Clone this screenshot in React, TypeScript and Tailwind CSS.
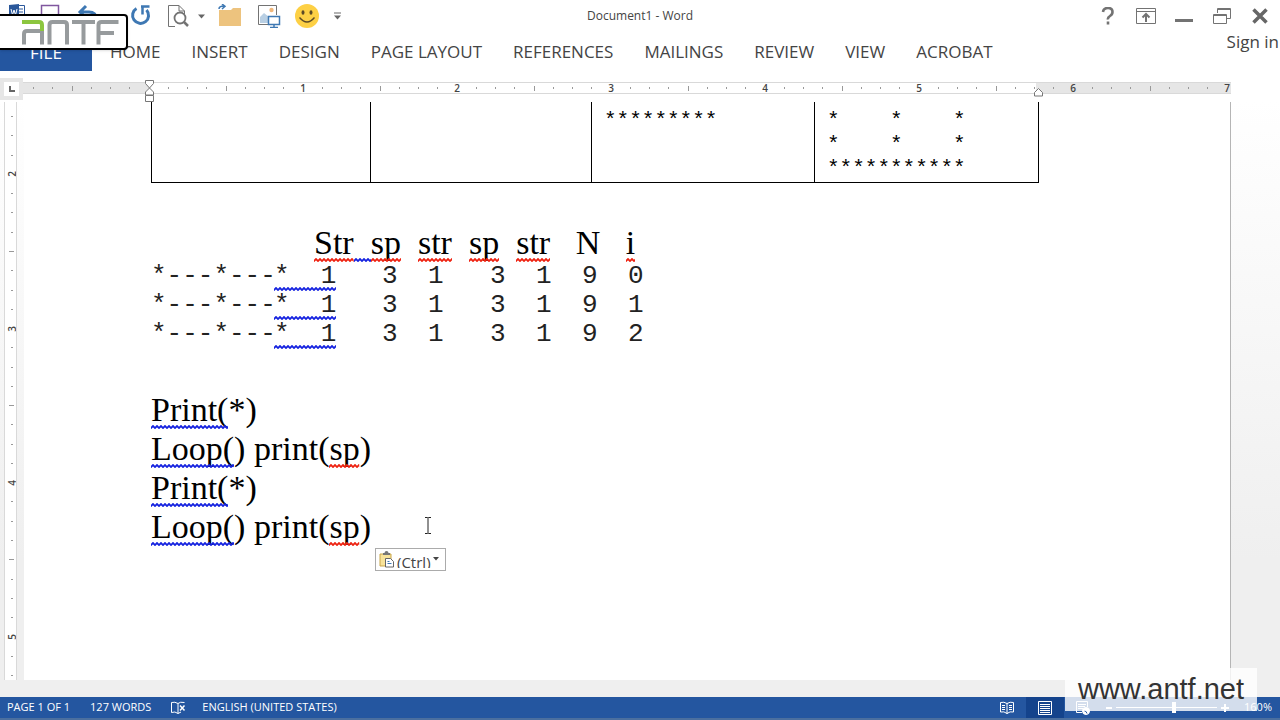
import { useState } from 'react';
import type { ReactNode } from 'react';

const tabs = ['HOME', 'INSERT', 'DESIGN', 'PAGE LAYOUT', 'REFERENCES', 'MAILINGS', 'REVIEW', 'VIEW', 'ACROBAT'];

const traceRows = [
  ['3', '1', '3', '1', '9', '0'],
  ['3', '1', '3', '1', '9', '1'],
  ['3', '1', '3', '1', '9', '2'],
];

const horizontalMarks = Array.from({ length: 63 }, (_, i) => i - 6);
const verticalMarks = Array.from({ length: 30 }, (_, i) => i + 13);

// Spelling (red) and grammar (blue) squiggle under a run of text
function Squiggle({ color = 'blue', id, children }: { color?: 'blue' | 'red'; id: string; children: ReactNode }) {
  return (
    <span className="relative inline-block">
      {children}
      <svg className="absolute bottom-0 left-0 h-[4px] w-full" aria-hidden="true">
        <defs>
          <pattern id={id} width="4" height="4" patternUnits="userSpaceOnUse">
            <path
              d="M-1 2 L0 3 L2 1 L4 3 L5 2"
              fill="none"
              stroke={color === 'red' ? '#ee2211' : '#1522e0'}
              strokeWidth="1.8"
            />
          </pattern>
        </defs>
        <rect width="100%" height="4" fill={`url(#${id})`} />
      </svg>
    </span>
  );
}

function Caret() {
  return (
    <svg width="8" height="5" viewBox="0 0 8 5">
      <path d="M0 0.5h7L3.5 4.5z" fill="#666" />
    </svg>
  );
}

function Logo() {
  return (
    <div
      className="absolute left-0 top-[14px] flex h-9 w-[128px] items-center gap-[3px] rounded-r-sm border-y-2 border-r-2 border-black bg-white pl-[22px] shadow"
      role="img"
      aria-label="ANTF"
    >
      <svg width="98" height="26" viewBox="0 0 98 26" fill="none" stroke="#979b9d" strokeWidth="4">
        <path d="M2 25.500V15q0-3 3-3H20M20 12V25.500" />
        <path d="M0 3H17q3 0 3 3V12" stroke="#8cc63f" />
        <path d="M27.500 25.500V6q0-3 3-3H42q3 0 3 3V25.500" />
        <path d="M50 3H73M61.500 3V25.500" />
        <path d="M76.500 25.500V6q0-3 3-3H96.500M76.500 14H92" />
      </svg>
    </div>
  );
}

function QuickAccess() {
  return (
    <div className="flex h-8 items-center [&>button]:flex [&>button]:h-8 [&>button]:shrink-0 [&>button]:items-center [&>button]:justify-center">
      <button className="w-[34px]" aria-label="Word">
        <svg width="18" height="24" viewBox="0 0 18 24">
          <path d="M8 1.500h8.500v16H8" fill="#fff" stroke="#2a579a" />
          <path d="M10 5h5M10 8h5M10 11h5" stroke="#2a579a" />
          <path d="M1 1L11 0V20L1 18z" fill="#2a579a" />
          <path d="M3 5l1.500 6L6 6l1.500 5L9 5" fill="none" stroke="#fff" />
        </svg>
      </button>
      <button className="w-8" aria-label="Save">
        <svg width="20" height="24" viewBox="0 0 20 24" fill="none" stroke="#80579f" strokeWidth="1.500">
          <path d="M1.500 1.500h17v18h-17zM5 13h10v6" />
        </svg>
      </button>
      <button className="w-11" aria-label="Undo">
        <svg width="22" height="24" viewBox="0 0 22 24" fill="none" stroke="#3e78b3" strokeWidth="3">
          <path d="M9 2L3 8l6 6M3 8h9q7 0 8 8" />
        </svg>
      </button>
      <button className="w-3" aria-label="Undo list">
        <Caret />
      </button>
      <button className="w-[38px]" aria-label="Redo">
        <svg width="22" height="22" viewBox="0 0 22 22">
          <path d="M6.500 3.500A8 8 0 1 0 16.500 5" fill="none" stroke="#3e78b3" strokeWidth="3" />
          <path d="M11 1.500h8.500M12.500 1.500V9.500" fill="none" stroke="#3e78b3" strokeWidth="2.500" />
        </svg>
      </button>
      <button className="w-9" aria-label="Print preview">
        <svg width="22" height="24" viewBox="0 0 22 24" fill="none" stroke="#737373">
          <path d="M8 22.500H1.500v-21H12L17.500 7v3M12 1.500V7h5.500" />
          <circle cx="13" cy="14" r="5.500" strokeWidth="1.800" fill="#fff" />
          <path d="M17 18l4 4" strokeWidth="2.500" />
        </svg>
      </button>
      <button className="w-3" aria-label="Print preview list">
        <Caret />
      </button>
      <button className="w-11" aria-label="Open">
        <svg width="24" height="24" viewBox="0 0 24 24">
          <path d="M1 6h12l2-2h8v18H1z" fill="#edc37e" />
          <path d="M1 5q0-3 5-3M4 0l3 2.300L4 5" fill="none" stroke="#3e78b3" strokeWidth="1.500" />
        </svg>
      </button>
      <button className="w-[34px]" aria-label="Pictures">
        <svg width="24" height="24" viewBox="0 0 24 24" fill="none">
          <path d="M11 20.500H1.500v-19h18V11" stroke="#737373" />
          <circle cx="14.500" cy="6" r="2.200" fill="#f0b77c" />
          <path d="M3 19v-6l4-4 5 4v6z" fill="#b9cfe3" />
          <path d="M11.500 12.500h11v8h-11zM17 20.500v3M13 23.500h8" fill="#fff" stroke="#3e78b3" strokeWidth="1.500" />
        </svg>
      </button>
      <button className="w-[42px]" aria-label="Smiley">
        <svg width="24" height="24" viewBox="0 0 24 24">
          <circle cx="12" cy="12" r="12" fill="#fdd045" />
          <ellipse cx="8" cy="8.500" rx="1.500" ry="2.300" fill="#5c4a26" />
          <ellipse cx="16" cy="8.500" rx="1.500" ry="2.300" fill="#5c4a26" />
          <path d="M4.500 13.500q7.500 9 15 0" fill="none" stroke="#5c4a26" strokeWidth="1.300" />
        </svg>
      </button>
      <button className="w-5" aria-label="Customize toolbar">
        <svg width="8" height="8" viewBox="0 0 8 8">
          <path d="M0 1h7" stroke="#666" />
          <path d="M0 3.500h7L3.500 7.500z" fill="#666" />
        </svg>
      </button>
    </div>
  );
}

function WindowButtons() {
  return (
    <div className="flex h-8 items-center [&>button]:flex [&>button]:h-8 [&>button]:w-[38px] [&>button]:items-center [&>button]:justify-center">
      <button aria-label="Help">
        <svg width="14" height="18" viewBox="0 0 14 18" fill="none" stroke="#737373" strokeWidth="2.600">
          <path d="M2 5q.500-4 5-4t4.500 4q0 2.500-2.500 4T7 12.500M7 14.500V17.500" />
        </svg>
      </button>
      <button aria-label="Ribbon display options">
        <svg width="20" height="18" viewBox="0 0 20 18" fill="none" stroke="#737373">
          <path d="M.5 1.500h19v15H.5zM.5 4.500h19" />
          <path d="M10 15V7M6.500 10.500L10 7l3.500 3.500" strokeWidth="2" />
        </svg>
      </button>
      <button aria-label="Minimize">
        <svg width="18" height="18" viewBox="0 0 18 18">
          <path d="M0 13.500h18" stroke="#737373" strokeWidth="3" />
        </svg>
      </button>
      <button aria-label="Restore">
        <svg width="18" height="18" viewBox="0 0 18 18" fill="none" stroke="#737373">
          <path d="M4.500 6V1.500h13v10H14M4.500 2.500h13" />
          <path d="M.5 7.500h13v9H.5zM.5 8.500h13" />
        </svg>
      </button>
      <button aria-label="Close">
        <svg width="16" height="16" viewBox="0 0 16 16">
          <path d="M1.500 1.500l13 13M14.500 1.500l-13 13" stroke="#666" strokeWidth="3.500" />
        </svg>
      </button>
    </div>
  );
}

function HorizontalRuler() {
  return (
    <div className="flex h-[22px]">
      <button className="flex w-[23px] shrink-0 items-center justify-center bg-[#e6e6e6]" aria-label="Tab selector">
        <span className="flex h-[14px] w-[15px] items-center justify-center bg-white">
          <svg width="6" height="6" viewBox="0 0 6 6">
            <path d="M1 0V5H6" fill="none" stroke="#666" strokeWidth="2" />
          </svg>
        </span>
      </button>
      <div className="relative mt-1 flex h-3 w-[1208px] border-y border-[#d9d9d9] bg-[linear-gradient(to_right,#e6e6e6_126px,#fff_126px,#fff_1013px,#e6e6e6_1013px)]">
        <div className="flex min-w-0 flex-1 overflow-x-clip pl-px">
          <div className="flex w-[1213px] shrink-0 items-center">
            {horizontalMarks.map((k) => (
              <span key={k} className="flex flex-1 justify-center text-[10px] font-semibold leading-3 text-[#444]">
                {k > 0 && k % 8 === 0 ? (
                  k / 8
                ) : k === 0 ? null : (
                  <i className={k % 4 === 0 ? 'h-[5px] w-px bg-[#999]' : 'h-[2px] w-px bg-[#999]'} />
                )}
              </span>
            ))}
          </div>
        </div>
        <svg className="absolute left-[121px] top-[-3px]" width="11" height="23" viewBox="0 0 11 23" fill="#fff" stroke="#777">
          <path d="M1.500 .5h8v3L5.500 8 9.500 12v3h-8v-3L5.500 8 1.500 3.500z" />
          <path d="M1.500 15.500h8v6h-8z" />
        </svg>
        <svg className="absolute left-[1010px] top-[5px]" width="11" height="9" viewBox="0 0 11 9" fill="#fff" stroke="#777">
          <path d="M1.500 8V4.500L5.500 .5l4 4V8z" />
        </svg>
      </div>
    </div>
  );
}

function VerticalRuler() {
  return (
    <div className="ml-1 mr-[7px] w-[13px] shrink-0 overflow-hidden border-x border-[#d9d9d9] bg-white pl-[2px] pt-[5px]">
      <div className="flex h-[578px] flex-col">
        {verticalMarks.map((k) => (
          <span key={k} className="flex flex-1 items-center justify-center text-[10px] font-semibold leading-3 text-[#444]">
            {k % 8 === 0 ? (
              <span className="-rotate-90">{k / 8}</span>
            ) : (
              <i className={k % 4 === 0 ? 'h-px w-[5px] bg-[#999]' : 'h-px w-[2px] bg-[#999]'} />
            )}
          </span>
        ))}
      </div>
    </div>
  );
}

function ShapeTable() {
  return (
    <table className="w-[888px] table-fixed border-collapse border border-t-0 border-black font-['Liberation_Mono',monospace] text-[21px] leading-6">
      <tbody>
        <tr className="h-[80px] align-top [&>td]:border-r [&>td]:border-black [&>td]:px-3 [&>td]:pt-[7px]">
          <td className="w-[219px]" />
          <td className="w-[221px]" />
          <td className="w-[223px] whitespace-pre">*********</td>
          <td className="whitespace-pre">
            {'*    *    *\n'}
            {'*    *    *\n'}
            {'***********'}
          </td>
        </tr>
      </tbody>
    </table>
  );
}

function Trace() {
  return (
    <>
      <p className="mt-[40px] whitespace-pre pl-[163px]">
        <Squiggle id="h1" color="red">Str</Squiggle>
        <Squiggle id="h2">{'  '}</Squiggle>
        <Squiggle id="h3" color="red">sp</Squiggle>
        {'  '}
        <Squiggle id="h4" color="red">str</Squiggle>
        {'  '}
        <Squiggle id="h5" color="red">sp</Squiggle>
        {'  '}
        <Squiggle id="h6" color="red">str</Squiggle>
        {'   N   '}
        <Squiggle id="h7" color="red">i</Squiggle>
      </p>
      {traceRows.map((row, i) => (
        <p
          key={i}
          className="grid grid-cols-[123px_108px_46px_62px_46px_46px_46px_46px] whitespace-pre font-['Liberation_Mono',monospace] text-[26px] leading-[29px] text-[#222]"
        >
          <span>*---*---</span>
          <span>
            <Squiggle id={`row${i}`}>*  1</Squiggle>
          </span>
          {row.map((value, j) => (
            <span key={j}>{value}</span>
          ))}
        </p>
      ))}
    </>
  );
}

function PrintLine({ id }: { id: string }) {
  return (
    <p>
      <Squiggle id={id}>Print(</Squiggle>*)
    </p>
  );
}

function LoopLine({ id }: { id: string }) {
  return (
    <p>
      <Squiggle id={`${id}a`}>Loop(</Squiggle>) print(<Squiggle id={`${id}b`} color="red">sp</Squiggle>)
    </p>
  );
}

function PasteOptions() {
  return (
    <button className="ml-[224px] mt-[2px] flex h-[23px] w-[71px] items-start gap-[2px] border border-[#ababab] bg-white pl-[3px] pt-[2px] font-['Open_Sans',sans-serif] text-[15px] text-[#444]">
      <svg className="shrink-0" width="16" height="17" viewBox="0 0 16 17">
        <path d="M1 3h11v12H1z" fill="#f8e39a" stroke="#c9a64b" />
        <path d="M4 4V2h1.500q0-2 2-2t2 2H11v2z" fill="#777" />
        <path d="M6.500 7.500h5l3 3v5.500h-8z" fill="#fff" stroke="#666" />
        <path d="M8.500 10.500h2M8.500 12.500h4" stroke="#3e78b3" />
      </svg>
      <span className="h-[17px] overflow-hidden leading-[22px]">(Ctrl)</span>
      <svg className="mt-[6px] shrink-0" width="6" height="4" viewBox="0 0 6 4">
        <path d="M0 0h6L3 3.500z" fill="#444" />
      </svg>
    </button>
  );
}

function StatusBar({ zoom, onZoom }: { zoom: number; onZoom: (value: number) => void }) {
  return (
    <footer className="flex h-[23px] shrink-0 items-center border-b-2 border-[#4b6f9f] bg-[#2456a0] pl-[7px] text-[11px] text-white">
      <span>PAGE 1 OF 1</span>
      <span className="ml-5">127 WORDS</span>
      <button className="ml-5" aria-label="Proofing">
        <svg width="15" height="14" viewBox="0 0 15 14" fill="none" stroke="#fff">
          <path d="M7 12.500Q4 10 .5 11.500V1.500Q4 .5 7 2.500zM7 2.500Q9 .5 13.500 1.500M7 12.500l3-1.500" />
          <path d="M9 4.500l4.500 5M13.500 4.500l-4.500 5" strokeWidth="1.500" />
        </svg>
      </button>
      <span className="ml-4">ENGLISH (UNITED STATES)</span>
      <div className="ml-auto flex h-full items-center">
        <button className="flex h-full w-[38px] items-center justify-center" aria-label="Read mode">
          <svg width="14" height="14" viewBox="0 0 14 14" fill="none" stroke="#fff">
            <path d="M7 2.500Q4 .5.500 1.500v9.500Q4 10 7 12.500 10 10 13.500 11V1.500Q10 .5 7 2.500zM7 2v11M2 4.500h3M2 6.500h3M2 8.500h3M9 4.500h3M9 6.500h3M9 8.500h3" />
          </svg>
        </button>
        <button className="flex h-full w-[38px] items-center justify-center bg-[#14438c]" aria-label="Print layout">
          <svg width="14" height="14" viewBox="0 0 14 14" fill="none" stroke="#fff">
            <path d="M.5.500h13v13H.5zM2 3.500h10M2 5.500h10M2 7.500h10M2 9.500h10M2 11.500h10" />
          </svg>
        </button>
        <button className="flex h-full w-[38px] items-center justify-center" aria-label="Web layout">
          <svg width="14" height="14" viewBox="0 0 14 14" fill="none" stroke="#fff">
            <path d="M6 11.500H.5V.5h11V6M2 3.500h8M2 5.500h7M2 7.500h5" />
            <circle cx="10" cy="10" r="3.500" fill="#fff" />
            <path d="M8 9.500l2 1 1 2" stroke="#2456a0" />
          </svg>
        </button>
        <button className="ml-1 h-[2px] w-[6px] bg-white" aria-label="Zoom out" />
        <input
          type="range"
          aria-label="Zoom"
          min={10}
          max={270}
          value={zoom}
          onChange={(e) => onZoom(Number(e.target.value))}
          className="mx-1 h-3 w-[101px] appearance-none bg-[linear-gradient(#fff,#fff)] bg-[length:100%_1px] bg-center bg-no-repeat [&::-webkit-slider-thumb]:h-[11px] [&::-webkit-slider-thumb]:w-1 [&::-webkit-slider-thumb]:appearance-none [&::-webkit-slider-thumb]:bg-white"
        />
        <button aria-label="Zoom in">
          <svg width="8" height="8" viewBox="0 0 8 8">
            <path d="M0 4h8M4 0v8" stroke="#fff" strokeWidth="2" />
          </svg>
        </button>
        <span className="w-[51px] pr-2 text-right">{zoom}%</span>
      </div>
    </footer>
  );
}

export default function App() {
  const [zoom, setZoom] = useState(160);

  return (
    <div className="relative flex h-screen flex-col overflow-hidden bg-[linear-gradient(#fff_100px,#efefef_560px)] font-['Open_Sans',sans-serif] text-[#444]">
      <header>
        <div className="relative flex items-center justify-between pr-[1px]">
          <QuickAccess />
          <h1 className="absolute inset-x-0 mx-auto w-fit text-[12px] leading-5">Document1 - Word</h1>
          <WindowButtons />
        </div>
        <nav className="flex h-[39px] items-center text-[17px]">
          <button className="h-full w-[92px] bg-[#2456a0] pt-[3px] text-white">FILE</button>
          <div className="ml-[18px] flex gap-[31px]">
            {tabs.map((tab) => (
              <button key={tab}>{tab}</button>
            ))}
          </div>
          <a href="#signin" className="ml-auto h-5 self-start overflow-hidden pr-px leading-5">
            Sign in
          </a>
        </nav>
      </header>

      <div className="mt-[7px]">
        <HorizontalRuler />
      </div>

      <div className="mt-[2px] flex min-h-0 flex-1">
        <VerticalRuler />
        <main className="relative w-[1207px] border-r border-[#b5b5b5] bg-white pl-[127px] font-['Liberation_Serif',serif] text-[34px] leading-[39px] text-black">
          <ShapeTable />
          <Trace />
          <div className="mt-[41px]">
            <PrintLine id="p1" />
            <LoopLine id="l1" />
            <PrintLine id="p2" />
            <LoopLine id="l2" />
          </div>
          <PasteOptions />
          <svg className="absolute left-[400px] top-[415px]" width="8" height="17" viewBox="0 0 8 17" fill="none" stroke="#222">
            <path d="M1 .5h2.500l.5.500.5-.500H7M4 1v15M1 16.500h2.500l.5-.500.5.500H7" />
          </svg>
        </main>
      </div>

      <div className="h-[17px] shrink-0 bg-[#efefef]" />
      <StatusBar zoom={zoom} onZoom={setZoom} />

      <Logo />
      <div className="absolute bottom-[9px] right-[23px] flex h-[43px] w-[192px] items-center justify-center bg-white/80 font-['Liberation_Sans_Narrow','Liberation_Sans',sans-serif] text-[29px] leading-[43px] text-[#333]">
        www.antf.net
      </div>
    </div>
  );
}
